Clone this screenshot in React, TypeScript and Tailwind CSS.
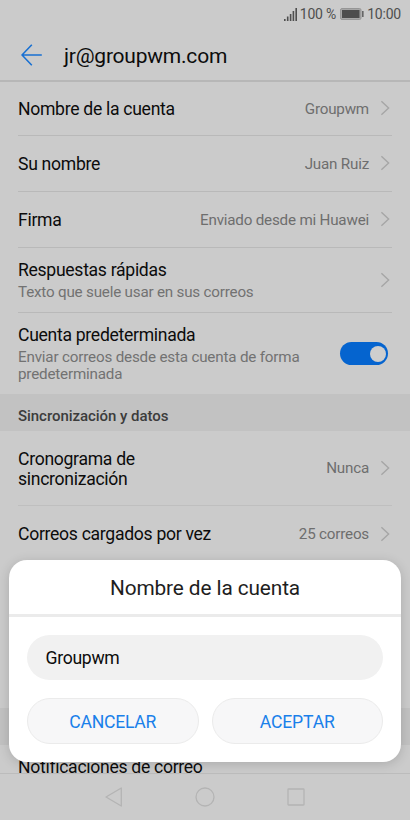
import type { ReactNode } from 'react';

function Chevron() {
  return (
    <svg className="mr-[2px] ml-[11px] h-4 w-[10px] shrink-0" viewBox="0 0 10 16" fill="none" stroke="#a6a6a6" strokeWidth="1.4">
      <path d="M1.4 1.2 8.6 8 1.4 14.8" />
    </svg>
  );
}

function Title({ children }: { children: ReactNode }) {
  return <div className="text-[17.6px] leading-5 tracking-[-0.3px] whitespace-nowrap text-[#0c0c0c]">{children}</div>;
}

function Value({ children }: { children: ReactNode }) {
  return (
    <div className="flex items-center text-[15.2px] tracking-[-0.2px] whitespace-nowrap text-[#6e6e6e]">
      <span className="pt-px">{children}</span>
      <Chevron />
    </div>
  );
}

function StatusBar() {
  return (
    <div className="flex h-7 items-center justify-end pr-[9px] text-[14px] leading-7 tracking-[-0.2px] text-[#4f4f4f]">
      <svg className="mr-[3px] h-[13px] w-[13px]" viewBox="0 0 13 13" fill="#4f4f4f">
        <rect x="0" y="11" width="1.6" height="2" />
        <rect x="2.9" y="8.5" width="1.6" height="4.5" />
        <rect x="5.8" y="6" width="1.6" height="7" />
        <rect x="8.6" y="3" width="1.6" height="10" />
        <rect x="11.4" y="0" width="1.6" height="13" />
      </svg>
      <span>100 %</span>
      <svg className="mr-[3px] ml-1 h-3 w-6" viewBox="0 0 24 12">
        <rect x="0.5" y="0.5" width="20.5" height="11" rx="1.5" fill="#a6a6a6" stroke="#969696" />
        <rect x="2" y="2" width="17.5" height="8" fill="#4d4d4d" />
        <rect x="22" y="3" width="1.6" height="6" fill="#666" />
      </svg>
      <span>10:00</span>
    </div>
  );
}

export default function App() {
  return (
    <div className="relative flex h-[820px] w-[410px] flex-col overflow-hidden bg-[#cbcbcb] font-['Roboto',sans-serif]">
      <StatusBar />
      <header className="flex h-[54px] shrink-0 items-center border-b-2 border-[#b7b7b7] pl-[21px]">
        <svg className="mt-[2px] h-[22px] w-[22px]" viewBox="0 0 22 22" fill="none" stroke="#1870d2" strokeWidth="1.6">
          <path d="M10.8 .8 1 11l9.8 10.2M1 11h19.8" />
        </svg>
        <h1 className="mt-[3px] ml-[21px] text-[21px] leading-7 tracking-[-0.22px] text-[#0c0c0c]">jr@groupwm.com</h1>
      </header>

      <main className="h-[691px] shrink-0 overflow-hidden">
        <div className="mx-[18px] flex h-[54px] items-center justify-between border-b border-[#b9b9b9]">
          <Title>Nombre de la cuenta</Title>
          <Value>Groupwm</Value>
        </div>
        <div className="mx-[18px] flex h-14 items-center justify-between border-b border-[#b9b9b9]">
          <Title>Su nombre</Title>
          <Value>Juan Ruiz</Value>
        </div>
        <div className="mx-[18px] flex h-14 items-center justify-between border-b border-[#b9b9b9]">
          <Title>Firma</Title>
          <Value>Enviado desde mi Huawei</Value>
        </div>
        <div className="mx-[18px] flex h-[65px] items-center justify-between border-b border-[#b9b9b9]">
          <div>
            <Title>Respuestas rápidas</Title>
            <p className="mt-1 text-[15.2px] leading-[17px] tracking-[-0.2px] text-[#727272]">
              Texto que suele usar en sus correos
            </p>
          </div>
          <Chevron />
        </div>
        <div className="flex h-[81px] items-center justify-between pr-[22px] pl-[18px]">
          <div>
            <Title>Cuenta predeterminada</Title>
            <p className="mt-1 w-[290px] text-[15.2px] leading-[17px] tracking-[-0.18px] text-[#727272]">
              Enviar correos desde esta cuenta de forma predeterminada
            </p>
          </div>
          <div className="flex h-[23px] w-12 items-center justify-end rounded-full bg-[#0564cf] pr-[2px]">
            <div className="h-4 w-4 rounded-full bg-[#cecece]" />
          </div>
        </div>
        <h2 className="flex h-[37px] items-center bg-[#c2c2c2] pt-2 pl-[18px] text-[15px] font-medium tracking-[-0.05px] text-[#3c3c3c]">
          Sincronización y datos
        </h2>
        <div className="mx-[18px] flex h-[75px] items-center justify-between border-b border-[#bfbfbf]">
          <div className="pt-px">
            <Title>
              Cronograma de
              <br />
              sincronización
            </Title>
          </div>
          <Value>Nunca</Value>
        </div>
        <div className="mx-[18px] flex h-14 items-center justify-between">
          <Title>Correos cargados por vez</Title>
          <Value>25 correos</Value>
        </div>
        <div className="mt-[146px] h-[37px] bg-[#c2c2c2]" />
        <div className="px-[18px] pt-3">
          <Title>Notificaciones de correo</Title>
        </div>
      </main>

      <nav className="flex h-[47px] shrink-0 items-center border-t border-[#bcbcbc] bg-[#cbcbcb] pl-[105px]">
        <svg className="h-5 w-[200px]" viewBox="0 0 200 20" fill="none" stroke="#b4b4b4" strokeWidth="1.3" strokeLinejoin="round">
          <path d="M16.3 1v18L1 10Z" />
          <circle cx="100" cy="10" r="9" />
          <rect x="183" y="2" width="16" height="16" rx="0.5" />
        </svg>
      </nav>

      <div className="absolute top-[560px] left-[9px] h-[202px] w-[392px] rounded-[18px] bg-white shadow-[0_2px_12px_rgba(0,0,0,0.16)]">
        <h3 className="flex h-[57px] items-center justify-center border-b-[3px] border-[#ebebeb] pt-[4px] text-[20.8px] tracking-[-0.1px] text-[#1e1e1e]">
          Nombre de la cuenta
        </h3>
        <div className="px-[18px] pt-[18px]">
          <div className="flex h-[45px] items-center rounded-full bg-[#f1f1f1] pt-px pl-[18.5px] text-[17.6px] tracking-[-0.3px] text-[#0c0c0c]">
            Groupwm
          </div>
          <div className="mt-[18px] flex gap-[13px]">
            <button className="h-[46px] flex-1 rounded-full border border-[#ebebeb] bg-[#f7f7f8] pt-[3px] text-[17.6px] tracking-[-0.25px] text-[#1a80ea]">
              CANCELAR
            </button>
            <button className="h-[46px] flex-1 rounded-full border border-[#ebebeb] bg-[#f7f7f8] pt-[3px] text-[17.6px] tracking-[-0.15px] text-[#1a80ea]">
              ACEPTAR
            </button>
          </div>
        </div>
      </div>
    </div>
  );
}
